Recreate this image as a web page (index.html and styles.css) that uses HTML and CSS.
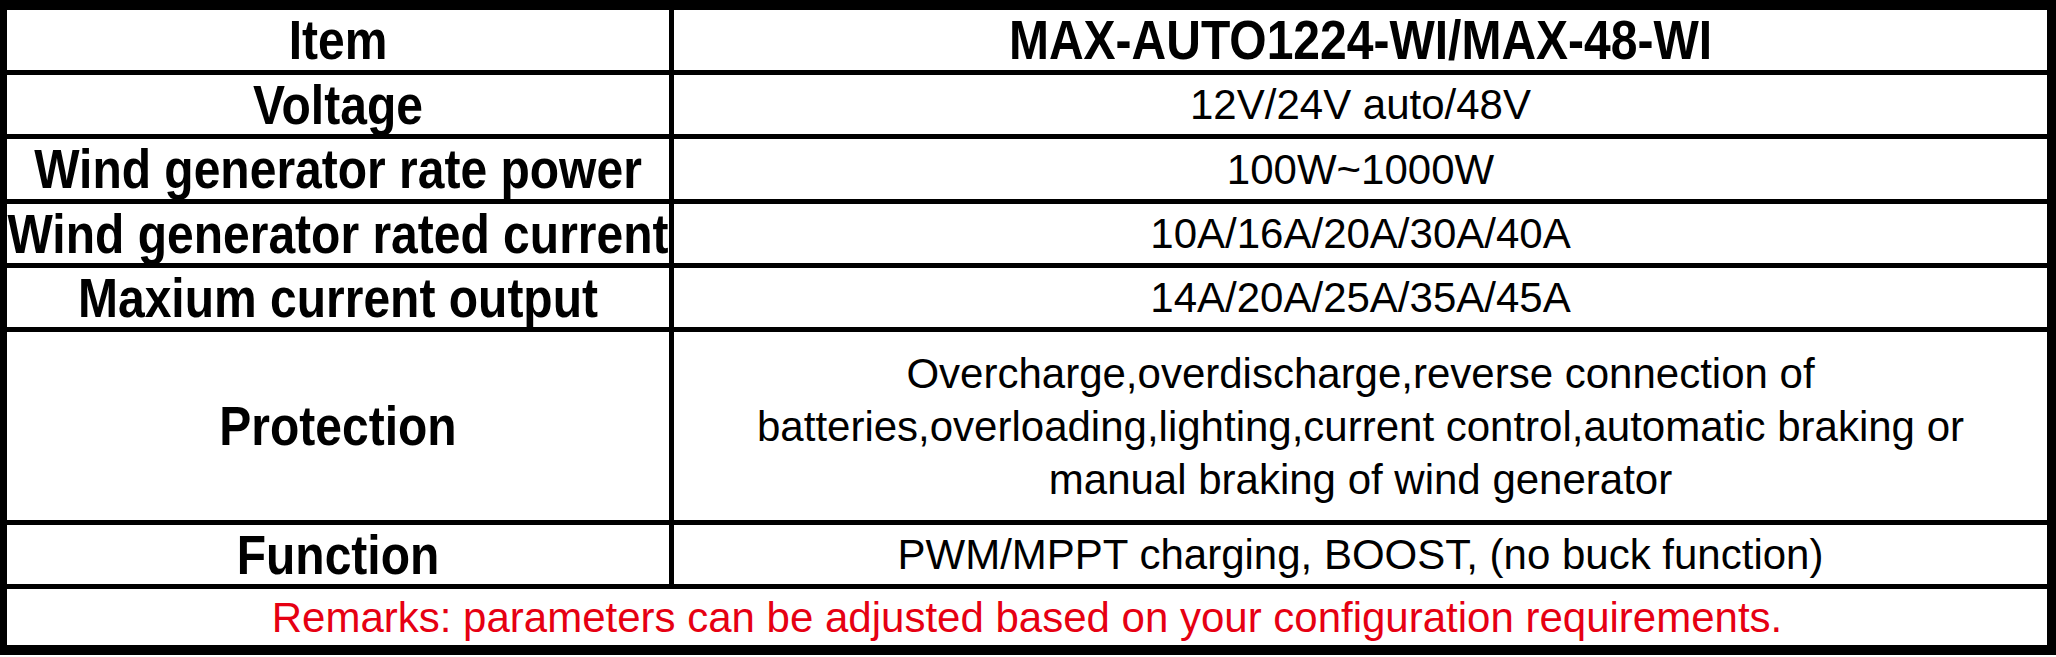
FILE: index.html
```html
<!DOCTYPE html>
<html lang="en">
<head>
<meta charset="utf-8">
<title>MAX-AUTO1224-WI / MAX-48-WI</title>
<link rel="stylesheet" href="styles.css">
</head>
<body>
<div class="sheet">
  <div class="row h60">
    <div class="cell key"><span class="bold">Item</span></div>
    <div class="cell val"><span class="bold">MAX-AUTO1224-WI/MAX-48-WI</span></div>
  </div>
  <div class="row h59">
    <div class="cell key"><span class="bold">Voltage</span></div>
    <div class="cell val"><span class="reg">12V/24V auto/48V</span></div>
  </div>
  <div class="row h60">
    <div class="cell key"><span class="bold">Wind generator rate power</span></div>
    <div class="cell val"><span class="reg">100W~1000W</span></div>
  </div>
  <div class="row h59">
    <div class="cell key"><span class="bold">Wind generator rated current</span></div>
    <div class="cell val"><span class="reg">10A/16A/20A/30A/40A</span></div>
  </div>
  <div class="row h59">
    <div class="cell key"><span class="bold">Maxium current output</span></div>
    <div class="cell val"><span class="reg">14A/20A/25A/35A/45A</span></div>
  </div>
  <div class="row h188">
    <div class="cell key"><span class="bold">Protection</span></div>
    <div class="cell val"><span class="reg multi">Overcharge,overdischarge,reverse connection of<br>batteries,overloading,lighting,current control,automatic braking or<br>manual braking of wind generator</span></div>
  </div>
  <div class="row h59">
    <div class="cell key"><span class="bold">Function</span></div>
    <div class="cell val"><span class="reg">PWM/MPPT charging, BOOST, (no buck function)</span></div>
  </div>
  <div class="remark">
    <span class="reg red">Remarks: parameters can be adjusted based on your configuration requirements.</span>
  </div>
</div>
</body>
</html>
```

FILE: styles.css
```css
html, body {
  margin: 0;
  padding: 0;
  background: #fff;
}

body {
  width: 2056px;
  height: 657px;
  overflow: hidden;
  font-family: "Liberation Sans", Arial, sans-serif;
  color: #000;
}

.sheet {
  box-sizing: border-box;
  width: 2056px;
  height: 655px;
  border-style: solid;
  border-color: #000;
  border-width: 10px 9px 10px 7px;
  display: flex;
  flex-direction: column;
}

.row {
  display: grid;
  grid-template-columns: 667px 1fr;
  border-bottom: 5px solid #000;
  flex: none;
}

.h60 { height: 60px; }
.h59 { height: 59px; }
.h188 { height: 188px; }

.cell {
  display: flex;
  align-items: center;
  justify-content: center;
  overflow: visible;
  white-space: nowrap;
}

.key {
  border-right: 5px solid #000;
}

.remark {
  flex: 1;
  display: flex;
  align-items: center;
  justify-content: center;
  white-space: nowrap;
}

.bold {
  display: inline-block;
  font-weight: bold;
  font-size: 48px;
  line-height: 48px;
  transform: scaleY(1.17);
}

.reg {
  display: inline-block;
  font-size: 42px;
  line-height: 53px;
  text-align: center;
}

.red {
  color: #e60012;
}
```
